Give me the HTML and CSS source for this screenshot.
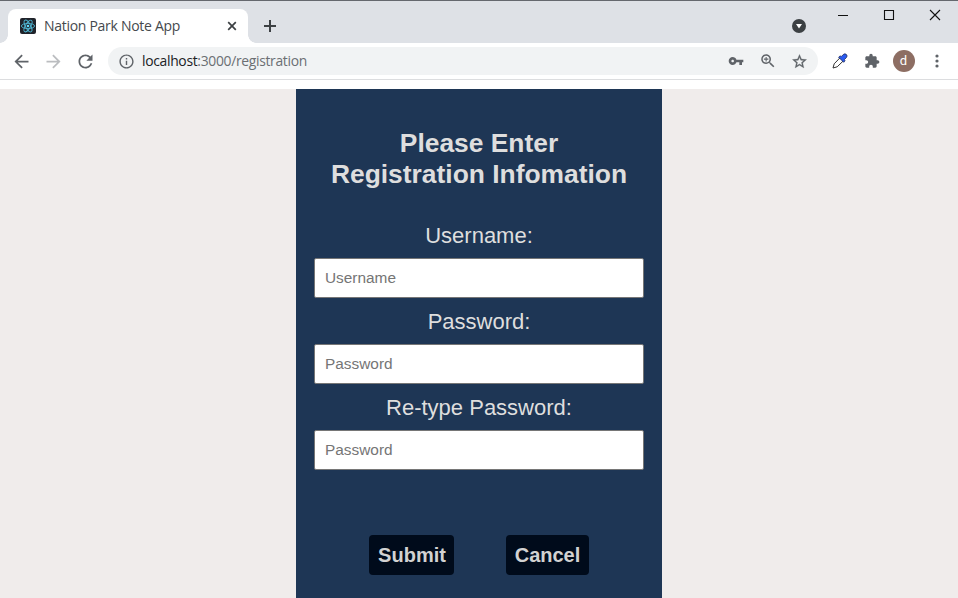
FILE: index.html
```html
<!DOCTYPE html>
<html lang="en">
<head>
<meta charset="utf-8">
<title>Nation Park Note App</title>
<link rel="stylesheet" href="styles.css">
</head>
<body>
<header class="browser">
  <div class="tabstrip">
    <div class="tab">
      <svg class="favicon" viewBox="0 0 16 16"><rect width="16" height="16" rx="2" fill="#20232a"/><g fill="none" stroke="#4fb6d3" stroke-width=".9"><ellipse cx="8" cy="8" rx="6.6" ry="2.6"/><ellipse cx="8" cy="8" rx="6.6" ry="2.6" transform="rotate(60 8 8)"/><ellipse cx="8" cy="8" rx="6.6" ry="2.6" transform="rotate(120 8 8)"/></g><circle cx="8" cy="8" r="1.3" fill="#61dafb"/></svg>
      <span class="tab-title">Nation Park Note App</span>
      <svg class="tab-close" viewBox="0 0 10 10"><path d="M1.2 1.2l7.6 7.6M8.8 1.2L1.2 8.8" stroke="#3c4043" stroke-width="1.7"/></svg>
    </div>
    <svg class="new-tab" viewBox="0 0 12 12"><path d="M6 0v12M0 6h12" stroke="#3c4043" stroke-width="2"/></svg>
    <svg class="tab-search" viewBox="0 0 14 14"><circle cx="7" cy="7" r="7" fill="#3c4043"/><path d="M4 5h6L7 9.4z" fill="#fff"/></svg>
    <div class="window-controls">
      <svg viewBox="0 0 12 12"><path d="M1 7.5h10" stroke="#111"/></svg>
      <svg viewBox="0 0 12 12"><path d="M1.5 2.5h9v9h-9z" fill="none" stroke="#111" stroke-width="1.1"/></svg>
      <svg viewBox="0 0 12 12"><path d="M1 2l10 10M11 2L1 12" stroke="#111" stroke-width="1.1"/></svg>
    </div>
  </div>
  <div class="toolbar">
    <svg class="nav" viewBox="0 0 24 24"><path d="M20 11H7.83l5.59-5.59L12 4l-8 8 8 8 1.41-1.41L7.83 13H20v-2z"/></svg>
    <svg class="nav disabled" viewBox="0 0 24 24"><path d="M12 4l-1.41 1.41L16.17 11H4v2h12.17l-5.58 5.59L12 20l8-8z"/></svg>
    <svg class="nav" viewBox="0 0 24 24"><path d="M17.65 6.35C16.2 4.9 14.21 4 12 4c-4.42 0-7.99 3.58-7.99 8s3.57 8 7.99 8c3.73 0 6.84-2.55 7.73-6h-2.08c-.82 2.33-3.04 4-5.65 4-3.31 0-6-2.69-6-6s2.69-6 6-6c1.66 0 3.14.69 4.22 1.78L13 11h7V4l-2.35 2.35z"/></svg>
    <div class="omnibox">
      <svg class="info" viewBox="0 0 24 24"><path d="M11 7h2v2h-2zm0 4h2v6h-2zm1-9C6.48 2 2 6.48 2 12s4.48 10 10 10 10-4.48 10-10S17.52 2 12 2zm0 18c-4.41 0-8-3.59-8-8s3.59-8 8-8 8 3.59 8 8-3.59 8-8 8z"/></svg>
      <span class="url"><span class="host">localhost</span>:3000/registration</span>
      <svg class="key" viewBox="0 0 24 24"><path d="M12.65 10C11.83 7.67 9.61 6 7 6c-3.31 0-6 2.69-6 6s2.69 6 6 6c2.61 0 4.83-1.67 5.65-4H17v4h4v-4h2v-4H12.65zM7 14c-1.1 0-2-.9-2-2s.9-2 2-2 2 .9 2 2-.9 2-2 2z"/></svg>
      <svg class="zoom" viewBox="0 0 24 24"><path d="M15.5 14h-.79l-.28-.27C15.41 12.59 16 11.11 16 9.5 16 5.91 13.09 3 9.5 3S3 5.91 3 9.5 5.91 16 9.5 16c1.61 0 3.09-.59 4.23-1.57l.27.28v.79l5 4.99L20.49 19l-4.99-5zm-6 0C7.01 14 5 11.99 5 9.5S7.01 5 9.5 5 14 7.01 14 9.5 11.99 14 9.5 14zM12.5 10.2h-2.3v2.3H8.8v-2.3H6.5V8.8h2.3V6.5h1.4v2.3h2.3z"/></svg>
      <svg class="star" viewBox="0 0 24 24"><path d="M22 9.24l-7.19-.62L12 2 9.19 8.63 2 9.24l5.46 4.73L5.82 21 12 17.27 18.18 21l-1.63-7.03L22 9.24zM12 15.4l-3.76 2.27 1-4.28-3.32-2.88 4.38-.38L12 6.1l1.71 4.04 4.38.38-3.32 2.88 1 4.28L12 15.4z"/></svg>
    </div>
    <svg class="dropper" viewBox="0 0 16 16"><path d="M8.2 4.6L2.2 10.8 1 15l4.2-1.2 6.2-6z" fill="#fff" stroke="#333" stroke-width="1" stroke-linejoin="round"/><path d="M6.6 4.2l1.5-1.3 1.2.6 2-2q1.7-1.4 3.1 0t0 3.1l-2 2 .6 1.2-1.3 1.5z" fill="#2a5bf0" stroke="#1d2a5c" stroke-width=".8" stroke-linejoin="round"/></svg>
    <svg class="puzzle" viewBox="0 0 24 24"><path d="M20.5 11H19V7c0-1.1-.9-2-2-2h-4V3.5C13 2.12 11.88 1 10.5 1S8 2.12 8 3.5V5H4c-1.1 0-1.99.9-1.99 2v3.8H3.5c1.49 0 2.7 1.21 2.7 2.7s-1.21 2.7-2.7 2.7H2V20c0 1.1.9 2 2 2h3.8v-1.5c0-1.49 1.21-2.7 2.7-2.7 1.49 0 2.7 1.21 2.7 2.7V22H17c1.1 0 2-.9 2-2v-4h1.5c1.38 0 2.5-1.12 2.5-2.5S21.88 11 20.5 11z"/></svg>
    <span class="avatar">d</span>
    <svg class="menu" viewBox="0 0 4 14"><circle cx="2" cy="2" r="1.6"/><circle cx="2" cy="7" r="1.6"/><circle cx="2" cy="12" r="1.6"/></svg>
  </div>
</header>
<main class="page">
  <form class="card">
    <h1 class="heading">Please Enter<br>Registration Infomation</h1>
    <label class="label" for="user">Username:</label>
    <input class="field" id="user" type="text" placeholder="Username">
    <label class="label" for="pass">Password:</label>
    <input class="field" id="pass" type="password" placeholder="Password">
    <label class="label" for="pass2">Re-type Password:</label>
    <input class="field" id="pass2" type="password" placeholder="Password">
    <div class="actions">
      <button class="button submit" type="button">Submit</button>
      <button class="button cancel" type="button">Cancel</button>
    </div>
  </form>
</main>
</body>
</html>
```
FILE: styles.css
```css
* { box-sizing: border-box; }
body {
  margin: 0;
  height: 598px;
  overflow: hidden;
  display: flex;
  flex-direction: column;
  background: #fff;
  font-family: "Liberation Sans", Arial, sans-serif;
}
svg { display: block; flex: none; }
.browser {
  flex: none;
  height: 80px;
  border-bottom: 1px solid #dcdddf;
  font-family: "Open Sans", "Noto Sans", sans-serif;
}
.tabstrip {
  height: 43px;
  border-top: 1px solid #65686e;
  background: #dee1e6;
  display: flex;
  align-items: flex-start;
  padding-left: 8px;
}
.tab {
  width: 240px;
  height: 34px;
  margin-top: 8px;
  padding: 0 11px 0 12px;
  display: flex;
  align-items: center;
  background: #fff;
  border-radius: 8px 8px 0 0;
  position: relative;
}
.tab::before, .tab::after {
  content: "";
  position: absolute;
  bottom: 0;
  width: 8px;
  height: 8px;
}
.tab::before { left: -8px; background: radial-gradient(circle at 0 0, transparent 7.5px, #fff 8px); }
.tab::after { right: -8px; background: radial-gradient(circle at 100% 0, transparent 7.5px, #fff 8px); }
.favicon { width: 16px; height: 16px; }
.tab-title {
  flex: 1;
  margin-left: 8px;
  font-size: 14px;
  letter-spacing: -0.29px;
  line-height: 18px;
  white-space: nowrap;
  color: #45494d;
}
.tab-close { width: 10px; height: 10px; }
.new-tab { width: 12px; height: 12px; margin: 19px 0 0 16px; }
.tab-search { width: 14px; height: 14px; margin: 18px 0 0 auto; }
.window-controls { display: flex; gap: 34px; margin: 7px 17px 0 31px; }
.window-controls svg { width: 12px; height: 12px; overflow: visible; }
.toolbar {
  height: 36px;
  display: flex;
  align-items: center;
  padding-left: 11px;
  fill: #5f6368;
}
.nav { width: 21px; height: 21px; margin-right: 11px; }
.disabled { fill: #bbbdc0; }
.omnibox {
  width: 710px;
  height: 28px;
  margin-left: .5px;
  border-radius: 14px;
  background: #f1f3f4;
  display: flex;
  align-items: center;
  padding: 0 9.5px 0 10px;
}
.info { width: 17px; height: 17px; }
.url {
  flex: 1;
  margin-left: 7.5px;
  font-size: 13.9px;
  letter-spacing: -0.32px;
  line-height: 18px;
  color: #6b6f73;
}
.host { color: #202124; }
.key { width: 16px; height: 16px; margin-right: 15px; }
.zoom { width: 18px; height: 18px; margin-right: 14.5px; }
.star { width: 17px; height: 17px; stroke: #5f6368; stroke-width: .4; }
.dropper { width: 16px; height: 16px; margin-left: 14px; }
.puzzle { width: 16px; height: 16px; margin-left: 16px; }
.avatar {
  width: 22px;
  height: 22px;
  margin-left: 13px;
  border-radius: 50%;
  background: #8d6e63;
  color: #fff;
  font: 13px/22px Roboto, sans-serif;
  text-align: center;
}
.menu { width: 4px; height: 14px; margin-left: 20px; }
.page {
  flex: 1;
  margin-top: 9px;
  background: #f0eceb;
  display: flex;
  justify-content: center;
}
.card {
  width: 366px;
  padding: 39px 18px 0;
  background: #1e3655;
  color: #dedede;
  text-align: center;
}
.heading {
  margin: 0 0 33px;
  font-size: 26.4px;
  line-height: 31px;
  font-weight: bold;
}
.label {
  display: block;
  height: 35px;
  font-size: 22px;
  line-height: 26px;
}
.field {
  display: block;
  width: 330px;
  height: 40px;
  margin: 0 0 11px;
  padding: 0 10px;
  border: 1px solid #767676;
  border-radius: 2px;
  background: #fff;
  font: 15.4px "Liberation Sans", Arial, sans-serif;
}
.field::placeholder { color: #757575; }
.actions {
  display: flex;
  justify-content: center;
  gap: 52px;
  margin-top: 65px;
}
.button {
  height: 40px;
  padding: 0;
  border: 0;
  border-radius: 4px;
  background: #000b1b;
  color: #d2d2d2;
  font: bold 20px "Liberation Sans", Arial, sans-serif;
}
.submit { width: 85px; padding-left: 1px; }
.cancel { width: 83px; }
```
